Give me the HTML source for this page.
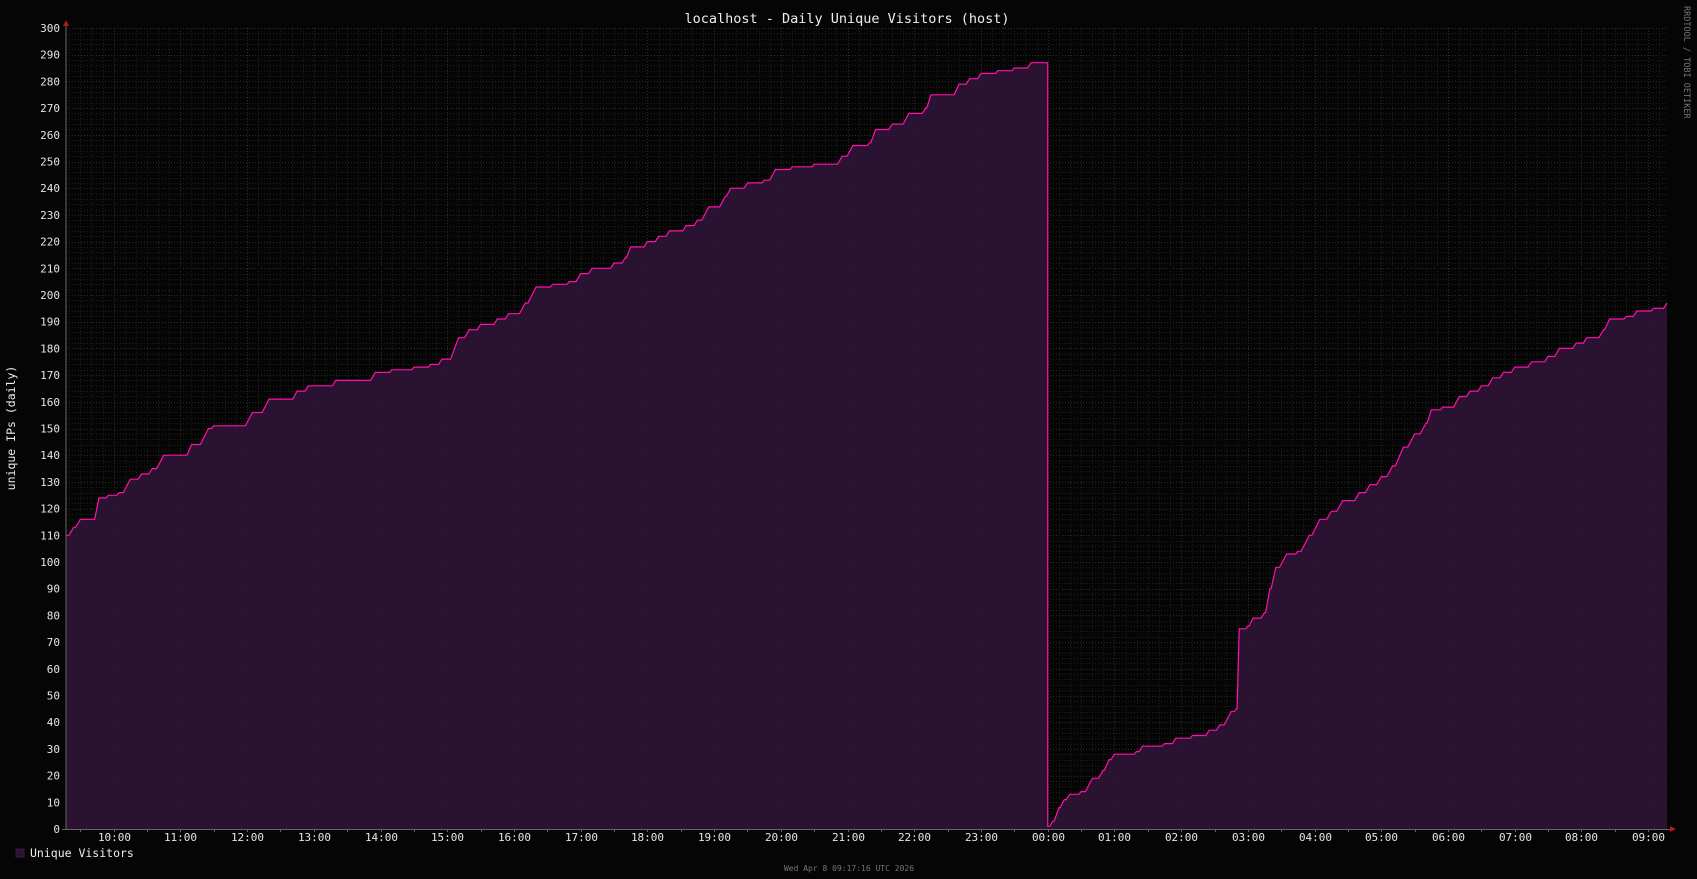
<!DOCTYPE html>
<html><head><meta charset="utf-8"><style>
html,body{margin:0;padding:0;background:#050505;width:1697px;height:879px;overflow:hidden}
svg{display:block}
text{font-family:"DejaVu Sans Mono","Liberation Mono",monospace}
</style></head><body>
<svg id="g" width="1697" height="879" viewBox="0 0 1697 879" xmlns="http://www.w3.org/2000/svg">
<rect width="1697" height="879" fill="#050505"/>
<g id="grid"></g>
<path id="area" fill="#2b1233" stroke="none"/>
<g id="grid2" opacity="0.3"></g>
<path id="line" fill="none" stroke="#ff11aa" stroke-width="1.2"/>
<line x1="66" y1="26" x2="66" y2="830" stroke="#666" stroke-width="1"/>
<line x1="62" y1="829.5" x2="1672" y2="829.5" stroke="#666" stroke-width="1"/>
<polygon points="63,26 69,26 66,20" fill="#b01c1c"/>
<polygon points="1670,826 1670,832 1676,829" fill="#b01c1c"/>
<g id="ylab" fill="#e6e6e6" font-size="11" text-anchor="end"></g>
<g id="xlab" fill="#e6e6e6" font-size="11" text-anchor="middle"></g>
<text x="847" y="23" fill="#eee" font-size="13.5" text-anchor="middle">localhost - Daily Unique Visitors (host)</text>
<text transform="translate(15,428) rotate(-90)" fill="#eee" font-size="11.5" text-anchor="middle">unique IPs (daily)</text>
<text transform="translate(1684,6) rotate(90)" fill="#777" font-size="8.5">RRDTOOL / TOBI OETIKER</text>
<rect x="16" y="849" width="8" height="8" fill="#2b1233" stroke="#3a1a44"/>
<text x="30" y="857" fill="#eee" font-size="11.5">Unique Visitors</text>
<text x="849" y="871" fill="#777" font-size="8" text-anchor="middle">Wed Apr  8 09:17:16 UTC 2026</text>
</svg>
<script>
var NS="http://www.w3.org/2000/svg";
var L=66,R=1668,T=28,B=829;
function Y(v){return B-v*(B-T)/300}
var X0=1047.7,PH=66.72;
function X(h){return X0+h*PH}
function el(p,n,a,t){var e=document.createElementNS(NS,n);for(var k in a)e.setAttribute(k,a[k]);if(t!=null)e.textContent=t;p.appendChild(e);return e}
var g=document.getElementById('grid'),g2=document.getElementById('grid2');
for(var v=0;v<=300;v+=2){var y=Math.round(Y(v))+0.5;var maj=v%10==0;
 [g,g2].forEach(function(gg){el(gg,'line',{x1:L,x2:R,y1:y,y2:y,stroke:maj?'#2e2e2e':'#1e1e1e','stroke-dasharray':'1,2'})});
 if(maj)el(document.getElementById('ylab'),'text',{x:60,y:Y(v)+4},String(v));}
var startH=-14.72;
for(var m=Math.ceil(startH*6);X(m/6)<=R;m++){var x=Math.round(X(m/6))+0.5;if(x<L)continue;var maj=m%6==0;
 [g,g2].forEach(function(gg){el(gg,'line',{x1:x,x2:x,y1:T,y2:B,stroke:maj?'#2e2e2e':'#1e1e1e','stroke-dasharray':'1,2'})});
 if(m%3==0)el(g,'line',{x1:x,x2:x,y1:B,y2:B+3,stroke:'#666'});
 if(maj){var hh=((m/6)%24+24)%24;el(document.getElementById('xlab'),'text',{x:x,y:841},(hh<10?'0':'')+hh+':00');}}
var d1=[[9.28,110],[9.4,113],[9.5,116],[9.7,116],[9.78,124],[9.92,125],[10.08,126],[10.25,131],[10.42,133],[10.58,135],[10.75,140],[11.08,140],[11.17,144],[11.42,150],[11.5,151],[11.92,151],[12.08,156],[12.33,161],[12.67,161],[12.75,164],[12.92,166],[13.25,166],[13.33,168],[13.83,168],[13.92,171],[14.17,172],[14.5,173],[14.75,174],[14.92,176],[15,176],[15.17,184],[15.33,187],[15.5,189],[15.75,191],[15.92,193],[16.17,197],[16.33,203],[16.58,204],[16.83,205],[17,208],[17.17,210],[17.5,212],[17.67,214],[17.75,218],[18,220],[18.17,222],[18.33,224],[18.58,226],[18.75,228],[18.92,233],[19.17,237],[19.25,240],[19.5,242],[19.75,243],[19.92,247],[20.17,248],[20.5,249],[20.75,249],[20.92,252],[21.08,256],[21.33,257],[21.42,262],[21.67,264],[21.92,268],[22.17,270],[22.25,275],[22.58,275],[22.67,279],[22.83,281],[23,283],[23.25,284],[23.5,285],[23.75,287],[23.99,287]];
var d2=[[0,1],[0.08,3],[0.17,8],[0.25,11],[0.33,13],[0.5,14],[0.67,19],[0.83,22],[0.92,26],[1,28],[1.33,29],[1.42,31],[1.75,32],[1.92,34],[2.17,35],[2.42,37],[2.58,39],[2.75,44],[2.83,45],[2.87,75],[3,76],[3.08,79],[3.25,81],[3.33,90],[3.42,98],[3.58,103],[3.75,104],[3.92,110],[4.08,116],[4.25,119],[4.42,123],[4.67,126],[4.83,129],[5,132],[5.17,136],[5.33,143],[5.5,148],[5.67,152],[5.75,157],[5.92,158],[6.17,162],[6.33,164],[6.5,166],[6.67,169],[6.83,171],[7,173],[7.25,175],[7.5,177],[7.67,180],[7.92,182],[8.08,184],[8.33,187],[8.42,191],[8.67,192],[8.83,194],[9.08,195],[9.27,197]];
var pts=[];
d1.forEach(function(p){pts.push([X(p[0]-24),p[1]])});
d2.forEach(function(p){pts.push([X(p[0]),p[1]])});
pts[0][0]=L;pts[pts.length-1][0]=R-1;
var line='';
pts.forEach(function(p,i){var x=p[0],y=Y(p[1]);
 if(i==0){line='M'+x.toFixed(1)+' '+y.toFixed(1);return;}
 var py=Y(pts[i-1][1]);
 if(i==d1.length){line+=' L'+x.toFixed(1)+' '+py.toFixed(1)+' L'+x.toFixed(1)+' '+y.toFixed(1);return;}
 var dv=Math.abs(p[1]-pts[i-1][1]);var w=Math.min(8,dv*1.2+1,(x-pts[i-1][0])*0.8);
 line+=' L'+(x-w).toFixed(1)+' '+py.toFixed(1)+' L'+x.toFixed(1)+' '+y.toFixed(1);});
document.getElementById('line').setAttribute('d',line);
document.getElementById('area').setAttribute('d',line+' L'+(R-1)+' '+B+' L'+L+' '+B+' Z');
</script>
</body></html>
